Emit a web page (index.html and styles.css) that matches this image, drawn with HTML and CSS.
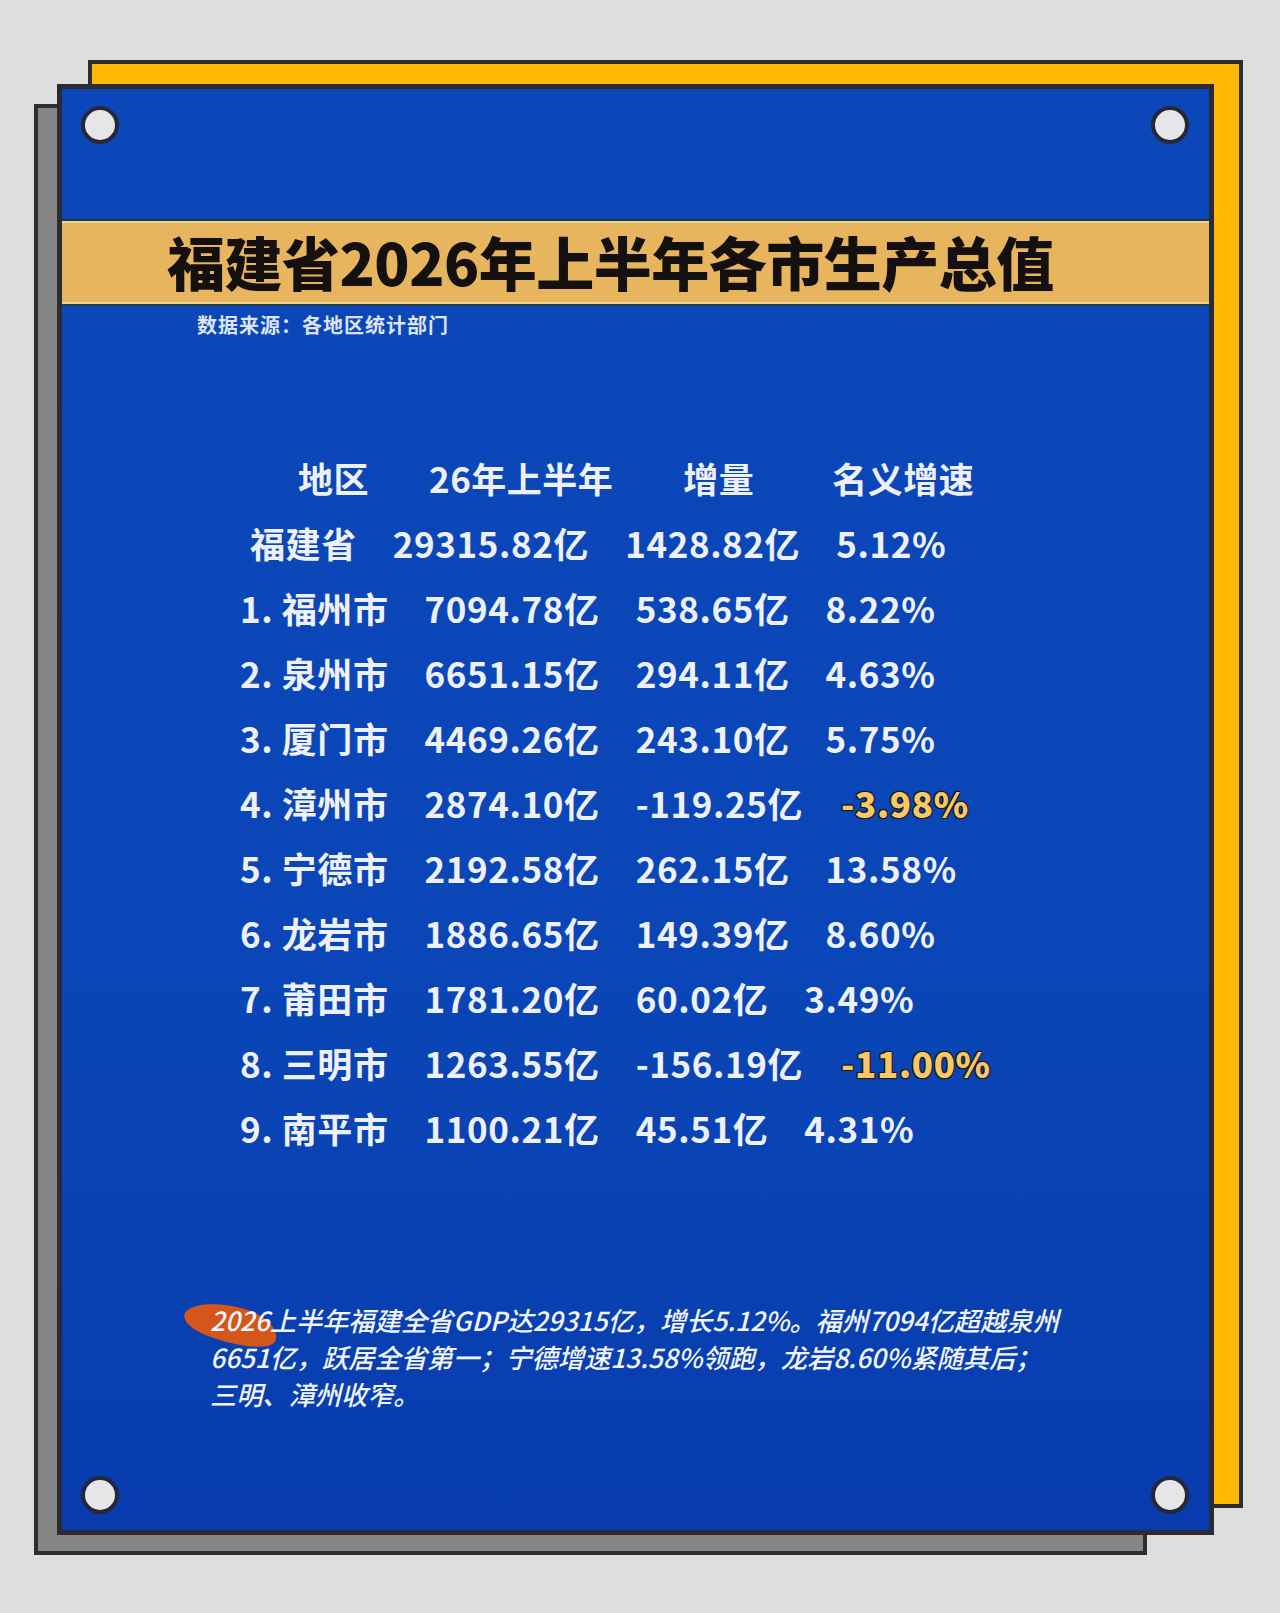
FILE: index.html
```html
<!DOCTYPE html>
<html lang="zh-CN">
<head>
<meta charset="utf-8">
<title>福建省2026年上半年各市生产总值</title>
<link rel="stylesheet" href="styles.css">
</head>
<body>
<div class="stack">
  <div class="back back-yellow"></div>
  <div class="back back-gray"></div>
  <div class="card">
    <span class="pin pin-tl"></span>
    <span class="pin pin-tr"></span>
    <span class="pin pin-bl"></span>
    <span class="pin pin-br"></span>

    <div class="band"><h1 class="title">福建省2026年上半年各市生产总值</h1></div>
    <p class="source">数据来源：各地区统计部门</p>

    <div class="table">
      <div class="row head">
        <span class="h1c">地区</span>
        <span class="h2c">26年上半年</span>
        <span class="h3c">增量</span>
        <span class="h4c">名义增速</span>
      </div>
      <div class="row total"><span>福建省</span><span>29315.82亿</span><span>1428.82亿</span><span>5.12%</span></div>
      <div class="row"><span>1. 福州市</span><span>7094.78亿</span><span>538.65亿</span><span>8.22%</span></div>
      <div class="row"><span>2. 泉州市</span><span>6651.15亿</span><span>294.11亿</span><span>4.63%</span></div>
      <div class="row"><span>3. 厦门市</span><span>4469.26亿</span><span>243.10亿</span><span>5.75%</span></div>
      <div class="row"><span>4. 漳州市</span><span>2874.10亿</span><span>-119.25亿</span><span class="neg">-3.98%</span></div>
      <div class="row"><span>5. 宁德市</span><span>2192.58亿</span><span>262.15亿</span><span>13.58%</span></div>
      <div class="row"><span>6. 龙岩市</span><span>1886.65亿</span><span>149.39亿</span><span>8.60%</span></div>
      <div class="row"><span>7. 莆田市</span><span>1781.20亿</span><span>60.02亿</span><span>3.49%</span></div>
      <div class="row"><span>8. 三明市</span><span>1263.55亿</span><span>-156.19亿</span><span class="neg">-11.00%</span></div>
      <div class="row"><span>9. 南平市</span><span>1100.21亿</span><span>45.51亿</span><span>4.31%</span></div>
    </div>

    <p class="summary">
      <svg class="brush" viewBox="0 0 96 46" width="96" height="46" aria-hidden="true"><path d="M5 7 C14 -1 42 0 62 6 C80 12 95 24 93 36 C91 46 70 45 52 41 C30 36 12 29 5 21 C0 15 0 10 5 7 Z" fill="#d4561b"/></svg>
      <span class="line">2026上半年福建全省GDP达29315亿，增长5.12%。福州7094亿超越泉州</span><br>
      <span class="line">6651亿，跃居全省第一；宁德增速13.58%领跑，龙岩8.60%紧随其后；</span><br>
      <span class="line">三明、漳州收窄。</span>
    </p>
  </div>
</div>
</body>
</html>
```
FILE: styles.css
```css
* { box-sizing: border-box; }
html, body { margin: 0; padding: 0; }
body {
  background: #dedede;
  width: 1280px;
  height: 1613px;
  overflow: hidden;
  font-family: "Noto Sans CJK SC", "Noto Sans", sans-serif;
}
.stack {
  position: relative;
  margin: 84px 0 0 57px;
  width: 1157px;
  height: 1451px;
}
.back {
  position: absolute;
  border: 4px solid #2e2e30;
}
.back-yellow {
  left: 31px;
  top: -24px;
  width: 1155px;
  height: 1448px;
  background: #ffb905;
}
.back-gray {
  left: -23px;
  top: 20px;
  width: 1113px;
  height: 1451px;
  background: #858585;
}
.card {
  position: relative;
  z-index: 1;
  width: 1157px;
  height: 1451px;
  border: 5px solid #2b2c33;
  background: linear-gradient(180deg, #0b47b8 0%, #0a46b7 60%, #083cae 100%);
  padding-top: 130px;
}
.pin {
  position: absolute;
  width: 38px;
  height: 38px;
  border-radius: 50%;
  background: #e6e6e8;
  border: 4px solid #26283a;
}
.pin-tl { left: 19px; top: 17px; }
.pin-tr { right: 20px; top: 17px; }
.pin-bl { left: 19px; bottom: 16px; }
.pin-br { right: 20px; bottom: 16px; }

.band {
  height: 87px;
  background: #e8b55f;
  border-top: 2px solid #1c3c52;
  border-bottom: 2px solid #1c3c52;
  box-shadow: inset 0 2px 0 #f3d18a, inset 0 -2px 0 #f3d18a;
  padding-left: 105px;
  display: flex;
  align-items: center;
}
.title {
  margin: 0;
  font-size: 58px;
  font-weight: 900;
  color: #141010;
  letter-spacing: -0.5px;
  line-height: 1;
  padding-bottom: 4px;
}
.source {
  margin: 7px 0 0 135px;
  font-size: 20px;
  font-weight: 700;
  color: #dfe4f2;
  line-height: 24px;
  letter-spacing: 1px;
}

.table {
  margin-top: 108px;
  color: #eef0fa;
  font-size: 35px;
  font-weight: 700;
}
.row {
  display: flex;
  gap: 36px;
  height: 65px;
  line-height: 65px;
  padding-left: 178px;
  white-space: nowrap;
  letter-spacing: 0.6px;
}
.row.head { padding-left: 236px; gap: 0; letter-spacing: 0.5px; }
.row.total { padding-left: 188px; }
.h2c { margin-left: 60px; }
.h3c { margin-left: 70px; }
.h4c { margin-left: 78px; }
.neg {
  color: #f6c86a;
  font-weight: 900;
  margin-left: 2px;
  text-shadow: 0 0 2px #1c1a12, 1px 1px 0 #1c1a12, -1px -1px 0 #1c1a12, 1px -1px 0 #1c1a12, -1px 1px 0 #1c1a12;
}

.summary {
  position: relative;
  margin: 142px 0 0 148px;
  font-size: 26.2px;
  font-weight: 500;
  line-height: 37px;
  color: #f2f4fb;
  font-style: italic;
  white-space: nowrap;
}
.brush {
  position: absolute;
  left: -27px;
  top: 1px;
  z-index: 0;
}
.line { position: relative; z-index: 1; }
```
